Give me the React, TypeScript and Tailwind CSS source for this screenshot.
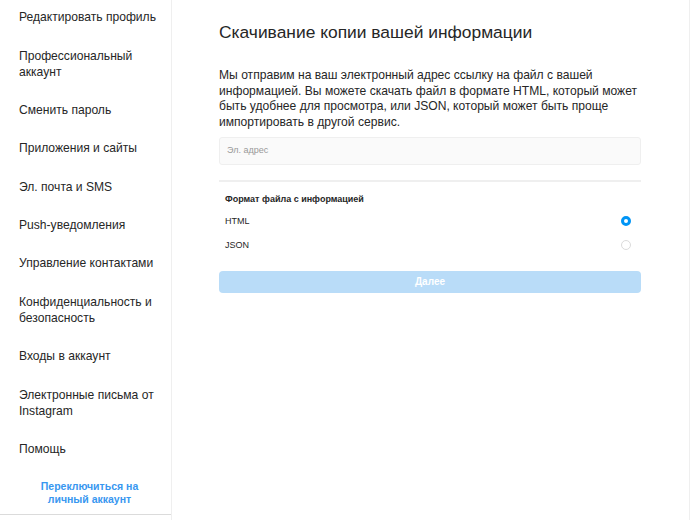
import React from "react";

const menu = [
  "Редактировать профиль",
  "Профессиональный аккаунт",
  "Сменить пароль",
  "Приложения и сайты",
  "Эл. почта и SMS",
  "Push-уведомления",
  "Управление контактами",
  "Конфиденциальность и безопасность",
  "Входы в аккаунт",
  "Электронные письма от Instagram",
  "Помощь",
];

export default function App() {
  return (
    <div
      className="w-[692px] h-[520px] overflow-hidden bg-white text-[#262626]"
      style={{ fontFamily: '"Liberation Sans", Arial, sans-serif' }}
    >
      <div className="flex h-full w-[690px] border-r border-[#efefef]">
        {/* sidebar */}
        <div className="w-[172px] shrink-0 border-r border-[#efefef] flex flex-col">
          <div className="-mt-0.5">
            {menu.map((item) => (
              <div key={item} className="pl-[19px] pr-3 py-[11.2px] text-[12.1px] leading-4">
                {item}
              </div>
            ))}
          </div>
          <div className="mt-[12px] pl-5 pr-3 text-center text-[10.5px] leading-[13px] font-bold text-[#3897f0]">
            Переключиться на
            <br />
            личный аккаунт
          </div>
          <div className="mt-[8px] border-t border-[#dbdbdb]" />
        </div>

        {/* main */}
        <div className="flex-1 pl-[47px] pr-[48px]">
          <h1 className="mt-[21px] text-[17.4px] leading-[22px]">
            Скачивание копии вашей информации
          </h1>
          <p className="mt-[25px] text-[12.1px] leading-[15.7px]">
            Мы отправим на ваш электронный адрес ссылку на файл с вашей информацией. Вы можете
            скачать файл в формате HTML, который может быть удобнее для просмотра, или JSON,
            который может быть проще импортировать в другой сервис.
          </p>
          <div className="mt-[6px] h-[28px] rounded-[3px] border border-[#efefef] bg-[#fafafa] flex items-center px-[7px] text-[9px] text-[#999999]">
            Эл. адрес
          </div>
          <div className="mt-[15px] h-[2px] bg-[#efefef]" />
          <div className="mt-[11px] pl-[6px] pr-[10px]">
            <div className="text-[9px] leading-[12px] font-bold">Формат файла с информацией</div>
            <div className="mt-[10px] flex items-center justify-between text-[9px] leading-[12px]">
              <span>HTML</span>
              <span className="w-[10px] h-[10px] rounded-full border-[3px] border-[#0095f6]" />
            </div>
            <div className="mt-[12px] flex items-center justify-between text-[9px] leading-[12px]">
              <span>JSON</span>
              <span className="w-[10px] h-[10px] rounded-full border border-[#dbdbdb]" />
            </div>
          </div>
          <div className="mt-[20px] h-[22px] rounded-[4px] bg-[#b9dcf8] flex items-center justify-center text-[10px] font-bold text-white">
            Далее
          </div>
        </div>
      </div>
    </div>
  );
}
